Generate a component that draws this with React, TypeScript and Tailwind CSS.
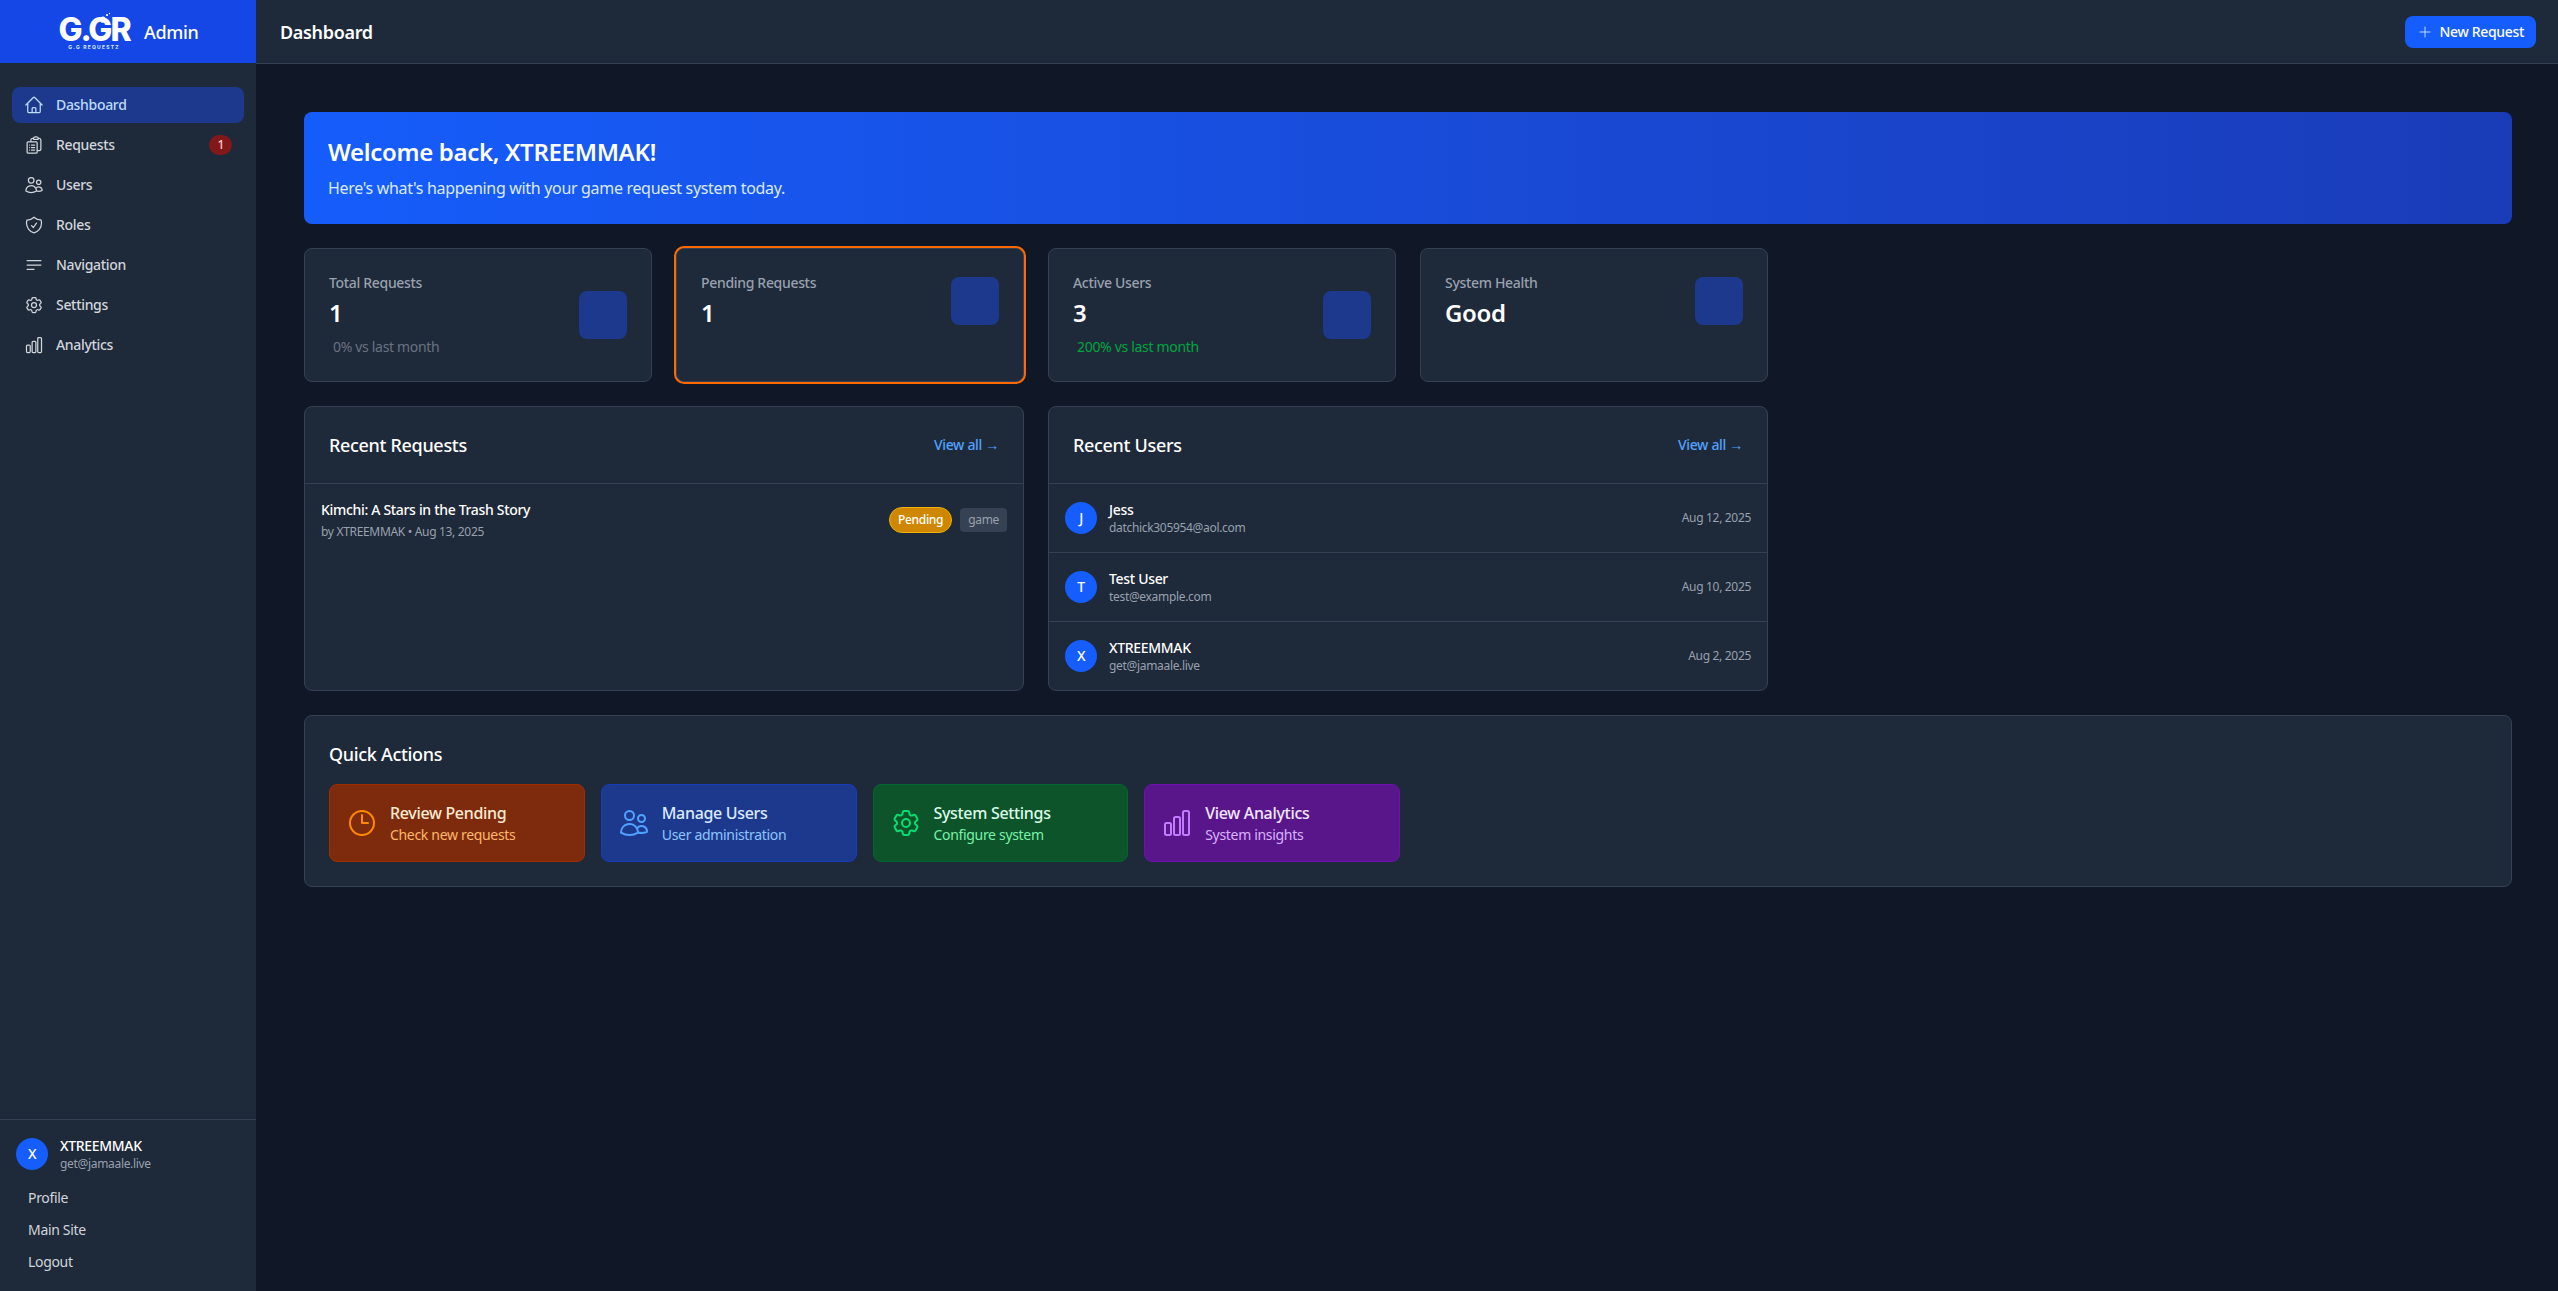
import React from "react";
import {
  HiOutlineHome,
  HiOutlineClipboardDocumentList,
  HiOutlineUsers,
  HiOutlineShieldCheck,
  HiOutlineBars3BottomLeft,
  HiOutlineCog6Tooth,
  HiOutlineChartBar,
  HiOutlineClock,
  HiOutlinePlus,
} from "react-icons/hi2";

const navItems = [
  { label: "Dashboard", icon: HiOutlineHome, active: true },
  { label: "Requests", icon: HiOutlineClipboardDocumentList, badge: "1" },
  { label: "Users", icon: HiOutlineUsers },
  { label: "Roles", icon: HiOutlineShieldCheck },
  { label: "Navigation", icon: HiOutlineBars3BottomLeft },
  { label: "Settings", icon: HiOutlineCog6Tooth },
  { label: "Analytics", icon: HiOutlineChartBar },
];

const recentUsers = [
  { initial: "J", name: "Jess", email: "datchick305954@aol.com", date: "Aug 12, 2025" },
  { initial: "T", name: "Test User", email: "test@example.com", date: "Aug 10, 2025" },
  { initial: "X", name: "XTREEMMAK", email: "get@jamaale.live", date: "Aug 2, 2025" },
];

const quickActions = [
  {
    title: "Review Pending",
    sub: "Check new requests",
    icon: HiOutlineClock,
    box: "bg-orange-900 border-orange-800",
    iconColor: "text-orange-400",
    titleColor: "text-orange-100",
    subColor: "text-orange-300",
  },
  {
    title: "Manage Users",
    sub: "User administration",
    icon: HiOutlineUsers,
    box: "bg-blue-900 border-blue-800",
    iconColor: "text-blue-400",
    titleColor: "text-blue-100",
    subColor: "text-blue-300",
  },
  {
    title: "System Settings",
    sub: "Configure system",
    icon: HiOutlineCog6Tooth,
    box: "bg-green-900 border-green-800",
    iconColor: "text-green-400",
    titleColor: "text-green-100",
    subColor: "text-green-300",
  },
  {
    title: "View Analytics",
    sub: "System insights",
    icon: HiOutlineChartBar,
    box: "bg-purple-900 border-purple-800",
    iconColor: "text-purple-400",
    titleColor: "text-purple-100",
    subColor: "text-purple-300",
  },
];

function Logo() {
  return (
    <div className="relative flex flex-col items-center w-[72px]">
      <div className="font-['Inter',sans-serif] font-extrabold text-[32px] leading-[25px] tracking-[-2px] text-white mt-[3px]">
        G.GR
      </div>
      <div className="font-['Inter',sans-serif] font-bold text-[5px] leading-[6px] tracking-[1.2px] text-blue-100 mt-[2px]">
        G.G REQUESTZ
      </div>
      <svg className="absolute left-[30px] top-[-3px] w-[26px] h-[14px]" viewBox="0 0 26 14">
        <circle cx="15" cy="8" r="2.4" fill="#fff" />
        <path d="M13 12l3-6 2 5z" fill="#fff" />
        <circle cx="19" cy="4" r="1.1" fill="#fff" />
        <circle cx="21.5" cy="2.5" r="0.7" fill="#fff" />
      </svg>
    </div>
  );
}

function Sidebar() {
  return (
    <aside className="w-64 shrink-0 h-full bg-gray-800 flex flex-col">
      <div className="h-[63px] bg-blue-700 flex items-center pl-[58px] gap-[14px]">
        <Logo />
        <span className="text-lg font-medium text-white">Admin</span>
      </div>
      <nav className="mt-6 px-3 flex flex-col gap-1">
        {navItems.map((item) => {
          const Icon = item.icon;
          return (
            <a
              key={item.label}
              className={
                item.active
                  ? "flex items-center h-9 px-3 rounded-lg bg-blue-900 text-blue-200 text-sm font-medium"
                  : "flex items-center h-9 px-3 rounded-lg text-gray-300 text-sm font-medium"
              }
            >
              <Icon className="w-5 h-5 mr-3" />
              <span className="flex-1">{item.label}</span>
              {item.badge && (
                <span className="bg-red-900 text-red-200 text-xs rounded-full px-2 h-5 flex items-center">
                  {item.badge}
                </span>
              )}
            </a>
          );
        })}
      </nav>
      <div className="mt-auto border-t border-gray-700 p-4 pb-[13px]">
        <div className="flex items-center gap-3">
          <div className="w-8 h-8 rounded-full bg-blue-600 flex items-center justify-center text-sm font-medium text-white">
            X
          </div>
          <div>
            <p className="text-sm font-medium text-white">XTREEMMAK</p>
            <p className="text-xs text-gray-400">get@jamaale.live</p>
          </div>
        </div>
        <div className="mt-[10px] flex flex-col">
          {["Profile", "Main Site", "Logout"].map((l) => (
            <a key={l} className="px-3 py-1.5 text-sm text-gray-300">
              {l}
            </a>
          ))}
        </div>
      </div>
    </aside>
  );
}

function StatCard({
  label,
  value,
  sub,
  subColor,
  highlight,
}: {
  label: string;
  value: string;
  sub?: string;
  subColor?: string;
  highlight?: boolean;
}) {
  return (
    <div
      className={
        highlight
          ? "bg-gray-800 border border-gray-700 rounded-lg p-6 ring-2 ring-orange-500"
          : "bg-gray-800 border border-gray-700 rounded-lg p-6"
      }
    >
      <div className="flex items-center justify-between">
        <div>
          <p className="text-sm font-medium text-gray-400">{label}</p>
          <p className="mt-1 text-2xl font-semibold text-white">{value}</p>
          {sub && <p className={`mt-2 ml-1 text-sm ${subColor}`}>{sub}</p>}
        </div>
        <div className="w-12 h-12 rounded-lg bg-blue-900" />
      </div>
    </div>
  );
}

function PanelHeader({ title }: { title: string }) {
  return (
    <div className="flex items-center justify-between px-6 py-6 border-b border-gray-700">
      <h3 className="text-lg font-medium text-white">{title}</h3>
      <a className="text-sm font-medium text-blue-400">View all →</a>
    </div>
  );
}

export default function App() {
  return (
    <div className="flex h-screen w-full overflow-hidden bg-gray-900 font-['Noto_Sans',sans-serif] tracking-[-0.02em]">
      <Sidebar />
      <div className="flex-1 flex flex-col min-w-0">
        <header className="h-16 shrink-0 bg-gray-800 border-b border-gray-700 flex items-center justify-between pl-6 pr-[22px]">
          <h1 className="text-lg font-semibold text-white">Dashboard</h1>
          <button className="flex items-center h-8 px-3 rounded-lg bg-blue-600 text-sm font-medium text-white">
            <HiOutlinePlus className="w-4 h-4 mr-1.5 text-blue-200" />
            New Request
          </button>
        </header>
        <main className="flex-1 pt-12 pl-12 pr-[46px]">
          <div className="rounded-lg bg-gradient-to-r from-blue-600 to-blue-800 p-6 text-white">
            <h2 className="text-2xl font-semibold mb-2">Welcome back, XTREEMMAK!</h2>
            <p className="text-blue-100">Here's what's happening with your game request system today.</p>
          </div>

          <div className="mt-6 w-[1464px] grid grid-cols-4 gap-6">
            <StatCard label="Total Requests" value="1" sub="0% vs last month" subColor="text-gray-500" />
            <StatCard label="Pending Requests" value="1" highlight />
            <StatCard label="Active Users" value="3" sub="200% vs last month" subColor="text-green-600" />
            <StatCard label="System Health" value="Good" />
          </div>

          <div className="mt-6 w-[1464px] grid grid-cols-2 gap-6">
            <div className="bg-gray-800 border border-gray-700 rounded-lg">
              <PanelHeader title="Recent Requests" />
              <div className="p-4 flex items-center justify-between">
                <div>
                  <p className="text-sm font-medium text-white">Kimchi: A Stars in the Trash Story</p>
                  <p className="mt-1 text-xs text-gray-400">by XTREEMMAK • Aug 13, 2025</p>
                </div>
                <div className="flex items-center gap-2">
                  <span className="px-2 py-1 rounded-full border border-yellow-500 bg-yellow-600 text-xs font-medium text-white">
                    Pending
                  </span>
                  <span className="px-2 py-1 rounded bg-gray-700 text-xs text-gray-400">game</span>
                </div>
              </div>
            </div>
            <div className="bg-gray-800 border border-gray-700 rounded-lg">
              <PanelHeader title="Recent Users" />
              <div className="divide-y divide-gray-700">
                {recentUsers.map((u) => (
                  <div key={u.email} className="p-4 flex items-center justify-between">
                    <div className="flex items-center gap-3">
                      <div className="w-8 h-8 rounded-full bg-blue-600 flex items-center justify-center text-sm font-medium text-white">
                        {u.initial}
                      </div>
                      <div>
                        <p className="text-sm font-medium text-white">{u.name}</p>
                        <p className="text-xs text-gray-400">{u.email}</p>
                      </div>
                    </div>
                    <span className="text-xs text-gray-400">{u.date}</span>
                  </div>
                ))}
              </div>
            </div>
          </div>

          <div className="mt-6 bg-gray-800 border border-gray-700 rounded-lg p-6">
            <h3 className="text-lg font-medium text-white mb-4">Quick Actions</h3>
            <div className="grid grid-cols-8 gap-4">
              {quickActions.map((a) => {
                const Icon = a.icon;
                return (
                  <a key={a.title} className={`flex items-center gap-3 p-4 rounded-lg border ${a.box}`}>
                    <Icon className={`w-8 h-8 ${a.iconColor}`} />
                    <div>
                      <p className={`font-medium ${a.titleColor}`}>{a.title}</p>
                      <p className={`text-sm ${a.subColor}`}>{a.sub}</p>
                    </div>
                  </a>
                );
              })}
            </div>
          </div>
        </main>
      </div>
    </div>
  );
}
